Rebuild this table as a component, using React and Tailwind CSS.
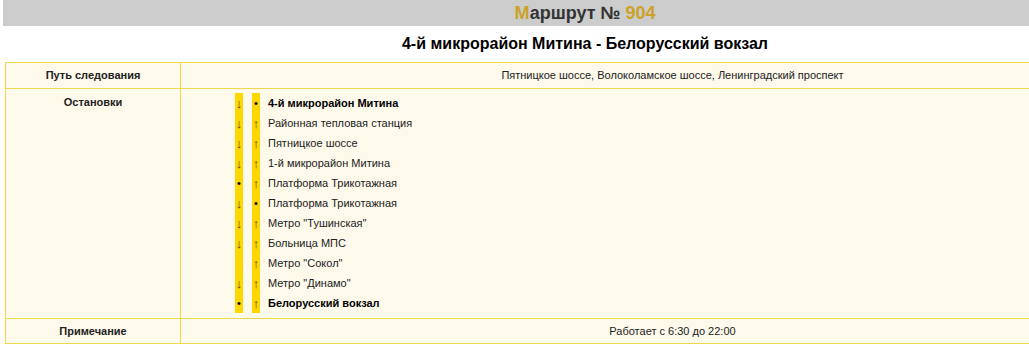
const stops = [
  { a: "↓", b: "•", name: "4-й микрорайон Митина", bold: true },
  { a: "↓", b: "↑", name: "Районная тепловая станция" },
  { a: "↓", b: "↑", name: "Пятницкое шоссе" },
  { a: "↓", b: "↑", name: "1-й микрорайон Митина" },
  { a: "•", b: "↑", name: "Платформа Трикотажная" },
  { a: "↓", b: "•", name: "Платформа Трикотажная" },
  { a: "↓", b: "↑", name: 'Метро "Тушинская"' },
  { a: "↓", b: "↑", name: "Больница МПС" },
  { a: "", b: "↑", name: 'Метро "Сокол"' },
  { a: "↓", b: "↑", name: 'Метро "Динамо"' },
  { a: "•", b: "↑", name: "Белорусский вокзал", bold: true },
];

function Mark({ c }) {
  const dot = c === "•";
  return (
    <span
      className={`w-[8px] h-[20px] bg-[#ffd700] flex items-center justify-center leading-none overflow-hidden ${
        dot ? "text-black text-[11px]" : "text-[#5a4400] text-[13px]"
      }`}
    >
      {c}
    </span>
  );
}

export default function App() {
  return (
    <div className="w-full overflow-hidden bg-white" style={{ fontFamily: '"Liberation Sans", Arial, sans-serif' }}>
      <div className="w-[1164px] ml-[3px] h-[359px]">
        <div className="h-[26px] bg-[#cccccc] flex items-center justify-center text-[18px] font-bold text-[#333333]">
          <span>
            <span className="text-[#c9a227]">М</span>аршрут № <span className="text-[#c9a227]">904</span>
          </span>
        </div>
        <div className="h-[36px] flex items-center justify-center text-[16px] font-bold text-black">
          4-й микрорайон Митина - Белорусский вокзал
        </div>
        <table className="ml-[2px] w-[1160px] border-collapse bg-[#fdf9eb] text-[11px] text-[#222]">
          <tbody>
            <tr>
              <td className="w-[175px] h-[26px] border border-[#f0d84e] text-center font-bold align-middle">
                Путь следования
              </td>
              <td className="border border-[#f0d84e] text-center align-middle">
                Пятницкое шоссе, Волоколамское шоссе, Ленинградский проспект
              </td>
            </tr>
            <tr>
              <td className="border border-[#f0d84e] text-center font-bold align-top pt-[5px]">Остановки</td>
              <td className="border border-[#f0d84e] align-top pt-[4px] pb-[5px] pl-[54px]">
                <div className="flex flex-col">
                  {stops.map((s, i) => (
                    <div key={i} className="flex items-center h-[20px]">
                      <Mark c={s.a} />
                      <span className="w-[9px]" />
                      <Mark c={s.b} />
                      <span className={`ml-[8px] ${s.bold ? "font-bold text-black" : ""}`}>{s.name}</span>
                    </div>
                  ))}
                </div>
              </td>
            </tr>
            <tr>
              <td className="h-[25px] border border-[#f0d84e] text-center font-bold align-middle">Примечание</td>
              <td className="border border-[#f0d84e] text-center align-middle">Работает с 6:30 до 22:00</td>
            </tr>
          </tbody>
        </table>
      </div>
    </div>
  );
}
